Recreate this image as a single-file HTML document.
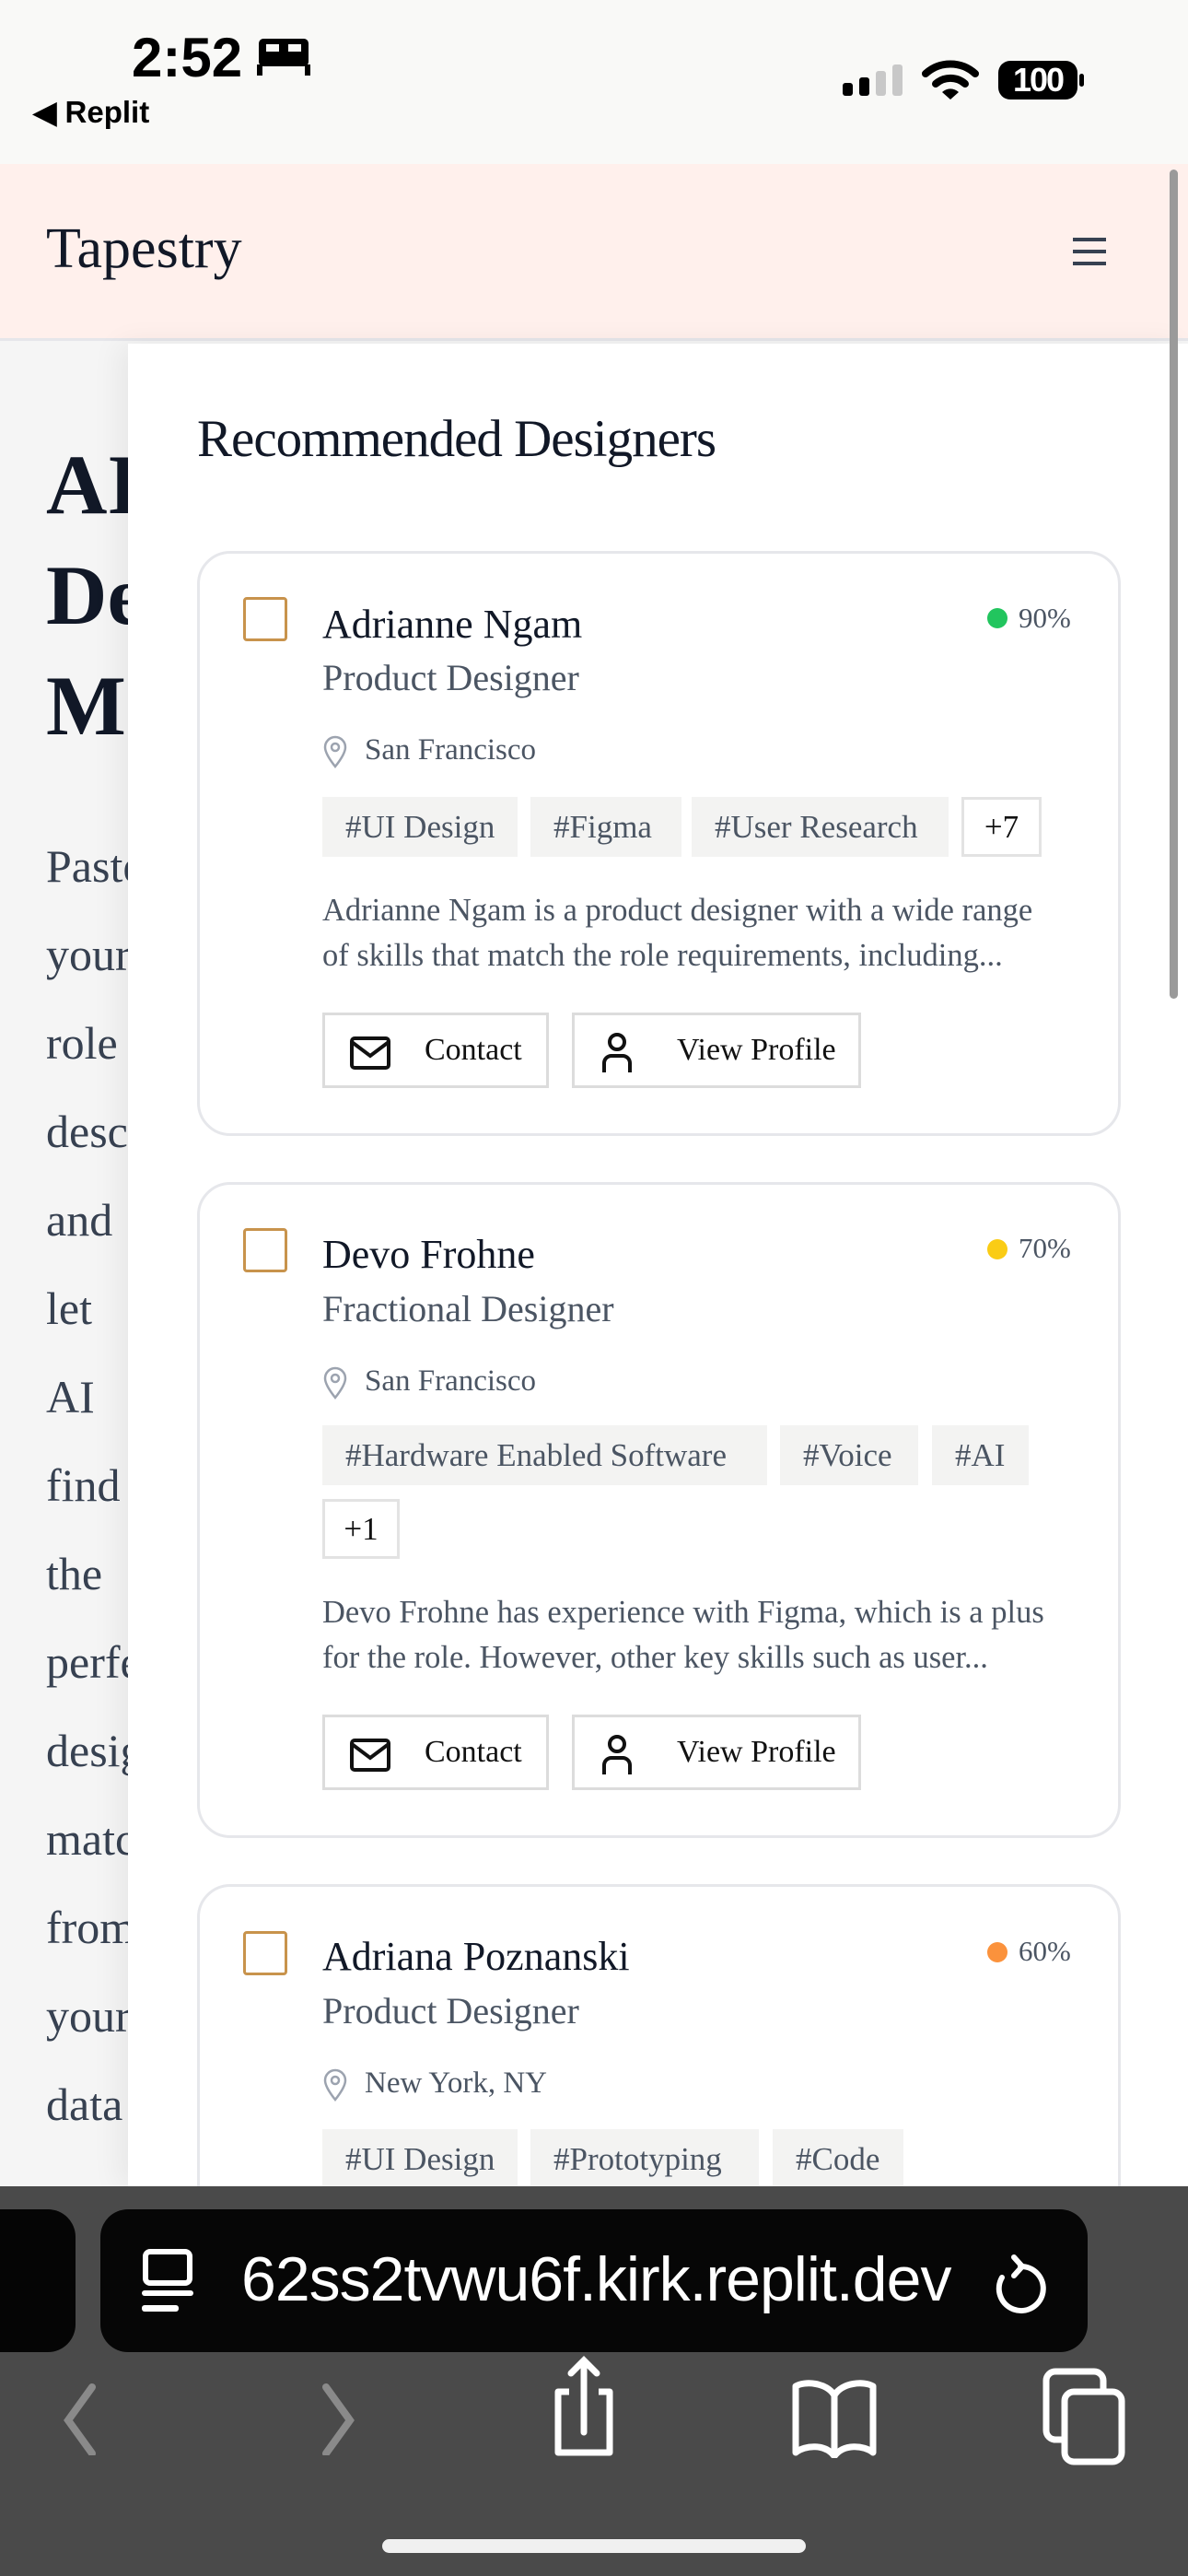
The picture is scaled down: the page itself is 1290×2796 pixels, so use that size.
<!DOCTYPE html>
<html><head><meta charset="utf-8"><style>
*{margin:0;padding:0;box-sizing:border-box}
body{width:1290px;height:2796px;overflow:hidden;position:relative;background:#f5f5f5;font-family:"Liberation Serif",serif;color:#111827}
.a{position:absolute;white-space:nowrap}
.st{background:#f9f9f7;left:0;top:0;width:1290px;height:178px}
.hdr{left:0;top:178px;width:1290px;height:192px;background:#fff0ec;border-bottom:3px solid #e6e6ea}
.panel{left:139px;top:373px;width:1151px;height:2000px;background:#fff;box-shadow:-10px 0 30px rgba(0,0,0,.06)}
.card{position:absolute;left:214px;width:1003px;border:3px solid #e6e7eb;border-radius:36px;background:#fff}
.cb{position:absolute;width:48px;height:48px;border:3px solid #c8934c;border-radius:4px}
.nm{font-size:44px;line-height:50px;color:#111827}
.rl{font-size:40px;line-height:44px;color:#4b5563}
.lc{font-size:33px;line-height:40px;color:#4b5563}
.tag{position:absolute;height:65px;background:#f3f3f2;font-size:35px;line-height:65px;color:#4b5563;padding-left:25px;overflow:hidden}
.more{background:#fff;border:3px solid #e3e3e3;color:#111;line-height:59px;padding-left:0;text-align:center}
.ds{font-size:34.5px;line-height:49px;color:#4b5563}
.btn{position:absolute;height:82px;border:3px solid #dcdcdc;background:#fff;font-size:34px;line-height:76px;color:#111}
.pct{font-size:31px;line-height:36px;color:#4b5563}
.dot{position:absolute;width:22px;height:22px;border-radius:50%}
.big{font-size:92px;line-height:120px;font-weight:bold;color:#111827;left:50px}
.bt{font-size:50px;line-height:96px;color:#374151;left:50px}
</style></head><body>
<div class="a st"></div>
<div class="a" style="left:143px;top:28px;font:bold 60px 'Liberation Sans',sans-serif;color:#000">2:52</div>
<svg class="a" style="left:279px;top:42px" width="58" height="40" viewBox="0 0 58 40"><rect x="2" y="0" width="54" height="30" rx="5" fill="#000"/><rect x="10" y="6" width="14" height="8" fill="#f9f9f7"/><rect x="34" y="6" width="14" height="8" fill="#f9f9f7"/><rect x="0" y="28" width="6" height="12" fill="#000"/><rect x="52" y="28" width="6" height="12" fill="#000"/></svg>
<div class="a" style="left:36px;top:102px;font:bold 33px 'Liberation Sans',sans-serif;color:#000">◀ Replit</div>
<svg class="a" style="left:913px;top:70px" width="70" height="36" viewBox="0 0 70 36"><rect x="2" y="20" width="11" height="14" rx="3" fill="#000"/><rect x="20" y="14" width="11" height="20" rx="3" fill="#000"/><rect x="38" y="7" width="11" height="27" rx="3" fill="#c8c8c8"/><rect x="56" y="0" width="11" height="34" rx="3" fill="#c8c8c8"/></svg>
<svg class="a" style="left:1000px;top:64px" width="64" height="44" viewBox="0 0 64 44"><path d="M5 16 A40 40 0 0 1 59 16" stroke="#000" stroke-width="8" fill="none" stroke-linecap="round"/><path d="M16 27 A24 24 0 0 1 48 27" stroke="#000" stroke-width="8" fill="none" stroke-linecap="round"/><path d="M23 36 L32 44 L41 36 A13 13 0 0 0 23 36Z" fill="#000"/></svg>
<div class="a" style="left:1084px;top:66px;width:86px;height:42px;background:#000;border-radius:13px;color:#fff;font:bold 36px/42px 'Liberation Sans',sans-serif;text-align:center;letter-spacing:-2px">100</div>
<div class="a" style="left:1172px;top:80px;width:5px;height:14px;background:#000;border-radius:3px"></div>

<div class="a hdr"></div>
<div class="a" style="left:50px;top:234px;font-size:62px;line-height:72px;color:#111827">Tapestry</div>
<div class="a" style="left:1165px;top:258px;width:36px;height:4px;background:#374151"></div>
<div class="a" style="left:1165px;top:271px;width:36px;height:4px;background:#374151"></div>
<div class="a" style="left:1165px;top:284px;width:36px;height:4px;background:#374151"></div>

<div class="a big" style="top:466px">AI<br>Designer<br>Match</div>
<div class="a bt" style="top:892px">Paste<br>your<br>role<br>description<br>and<br>let<br>AI<br>find<br>the<br>perfect<br>designer<br>matches<br>from<br>your<br>data</div>

<div class="a panel"></div>
<div class="a" style="left:1270px;top:184px;width:9px;height:900px;background:#9a9a9a;border-radius:5px"></div>
<div class="a" style="left:214px;top:444px;font-size:57px;line-height:66px;color:#111827;letter-spacing:-1px">Recommended Designers</div>

<!-- card 1 -->
<div class="card" style="top:598px;height:635px"></div>
<div class="cb" style="left:264px;top:648px"></div>
<div class="a nm" style="left:350px;top:653px">Adrianne Ngam</div>
<div class="a rl" style="left:350px;top:714px">Product Designer</div>
<div class="dot" style="left:1072px;top:660px;background:#22c55e"></div>
<div class="a pct" style="left:1106px;top:653px">90%</div>
<svg class="a" style="left:350px;top:798px" width="28" height="36" viewBox="0 0 28 36"><path d="M14 34C6 24 3 18 3 13a11 11 0 0 1 22 0c0 5-3 11-11 21z" fill="none" stroke="#9ca3af" stroke-width="2.5"/><circle cx="14" cy="13" r="4" fill="none" stroke="#9ca3af" stroke-width="2.5"/></svg>
<div class="a lc" style="left:396px;top:794px">San Francisco</div>
<div class="tag" style="left:350px;top:865px;width:212px">#UI Design</div>
<div class="tag" style="left:576px;top:865px;width:164px">#Figma</div>
<div class="tag" style="left:751px;top:865px;width:279px">#User Research</div>
<div class="tag more" style="left:1044px;top:865px;width:87px">+7</div>
<div class="a ds" style="left:350px;top:964px">Adrianne Ngam is a product designer with a wide range<br>of skills that match the role requirements, including...</div>
<div class="btn" style="left:350px;top:1099px;width:246px"><svg class="a" style="left:26px;top:22px" width="46" height="38" viewBox="0 0 46 38"><rect x="3" y="3" width="40" height="32" rx="3" fill="none" stroke="#111" stroke-width="4"/><path d="M3 7 L23 22 L43 7" fill="none" stroke="#111" stroke-width="4"/></svg><span class="a" style="left:108px;top:0">Contact</span></div>
<div class="btn" style="left:621px;top:1099px;width:314px"><svg class="a" style="left:28px;top:18px" width="36" height="44" viewBox="0 0 36 44"><circle cx="18" cy="11" r="8" fill="none" stroke="#111" stroke-width="4"/><path d="M4 44 V34 a8 8 0 0 1 8-8 h12 a8 8 0 0 1 8 8 V44" fill="none" stroke="#111" stroke-width="4"/></svg><span class="a" style="left:111px;top:0">View Profile</span></div>

<!-- card 2 -->
<div class="card" style="top:1283px;height:712px"></div>
<div class="cb" style="left:264px;top:1333px"></div>
<div class="a nm" style="left:350px;top:1337px">Devo Frohne</div>
<div class="a rl" style="left:350px;top:1399px">Fractional Designer</div>
<div class="dot" style="left:1072px;top:1345px;background:#facc15"></div>
<div class="a pct" style="left:1106px;top:1337px">70%</div>
<svg class="a" style="left:350px;top:1483px" width="28" height="36" viewBox="0 0 28 36"><path d="M14 34C6 24 3 18 3 13a11 11 0 0 1 22 0c0 5-3 11-11 21z" fill="none" stroke="#9ca3af" stroke-width="2.5"/><circle cx="14" cy="13" r="4" fill="none" stroke="#9ca3af" stroke-width="2.5"/></svg>
<div class="a lc" style="left:396px;top:1479px">San Francisco</div>
<div class="tag" style="left:350px;top:1547px;width:483px">#Hardware Enabled Software</div>
<div class="tag" style="left:847px;top:1547px;width:150px">#Voice</div>
<div class="tag" style="left:1012px;top:1547px;width:105px">#AI</div>
<div class="tag more" style="left:350px;top:1627px;width:84px">+1</div>
<div class="a ds" style="left:350px;top:1726px">Devo Frohne has experience with Figma, which is a plus<br>for the role. However, other key skills such as user...</div>
<div class="btn" style="left:350px;top:1861px;width:246px"><svg class="a" style="left:26px;top:22px" width="46" height="38" viewBox="0 0 46 38"><rect x="3" y="3" width="40" height="32" rx="3" fill="none" stroke="#111" stroke-width="4"/><path d="M3 7 L23 22 L43 7" fill="none" stroke="#111" stroke-width="4"/></svg><span class="a" style="left:108px;top:0">Contact</span></div>
<div class="btn" style="left:621px;top:1861px;width:314px"><svg class="a" style="left:28px;top:18px" width="36" height="44" viewBox="0 0 36 44"><circle cx="18" cy="11" r="8" fill="none" stroke="#111" stroke-width="4"/><path d="M4 44 V34 a8 8 0 0 1 8-8 h12 a8 8 0 0 1 8 8 V44" fill="none" stroke="#111" stroke-width="4"/></svg><span class="a" style="left:111px;top:0">View Profile</span></div>

<!-- card 3 -->
<div class="card" style="top:2045px;height:500px"></div>
<div class="cb" style="left:264px;top:2096px"></div>
<div class="a nm" style="left:350px;top:2099px">Adriana Poznanski</div>
<div class="a rl" style="left:350px;top:2161px">Product Designer</div>
<div class="dot" style="left:1072px;top:2108px;background:#fb923c"></div>
<div class="a pct" style="left:1106px;top:2100px">60%</div>
<svg class="a" style="left:350px;top:2245px" width="28" height="36" viewBox="0 0 28 36"><path d="M14 34C6 24 3 18 3 13a11 11 0 0 1 22 0c0 5-3 11-11 21z" fill="none" stroke="#9ca3af" stroke-width="2.5"/><circle cx="14" cy="13" r="4" fill="none" stroke="#9ca3af" stroke-width="2.5"/></svg>
<div class="a lc" style="left:396px;top:2241px">New York, NY</div>
<div class="tag" style="left:350px;top:2311px;width:212px">#UI Design</div>
<div class="tag" style="left:576px;top:2311px;width:248px">#Prototyping</div>
<div class="tag" style="left:839px;top:2311px;width:142px">#Code</div>

<!-- safari bottom -->
<div class="a" style="left:0;top:2373px;width:1290px;height:423px;background:#4a4a4a"></div>
<div class="a" style="left:-40px;top:2398px;width:122px;height:155px;background:#050505;border-radius:30px"></div>
<div class="a" style="left:109px;top:2398px;width:1072px;height:155px;background:#060606;border-radius:30px"></div>
<svg class="a" style="left:152px;top:2440px" width="60" height="70" viewBox="0 0 60 70"><rect x="6" y="4" width="48" height="34" rx="5" fill="none" stroke="#fff" stroke-width="6"/><rect x="2" y="46" width="56" height="6" rx="3" fill="#fff"/><rect x="2" y="62" width="40" height="7" rx="3" fill="#fff"/></svg>
<div class="a" style="left:262px;top:2434px;font:68px/80px 'Liberation Sans',sans-serif;color:#fff;letter-spacing:-1px">62ss2tvwu6f.kirk.replit.dev</div>
<svg class="a" style="left:1078px;top:2440px" width="64" height="76" viewBox="0 0 64 76"><path d="M30 20 A24 24 0 1 1 10 32" fill="none" stroke="#fff" stroke-width="6" stroke-linecap="round"/><path d="M23 10 L32 20 L23 30" fill="none" stroke="#fff" stroke-width="6" stroke-linecap="round" stroke-linejoin="round"/></svg>
<svg class="a" style="left:62px;top:2585px" width="50" height="80" viewBox="0 0 50 80"><path d="M38 6 L12 42 L38 78" fill="none" stroke="#8a8a8a" stroke-width="8" stroke-linecap="round"/></svg>
<svg class="a" style="left:342px;top:2585px" width="50" height="80" viewBox="0 0 50 80"><path d="M12 6 L38 42 L12 78" fill="none" stroke="#8a8a8a" stroke-width="8" stroke-linecap="round"/></svg>
<svg class="a" style="left:596px;top:2556px" width="76" height="112" viewBox="0 0 76 112"><path d="M38 6 V84 M24 20 L38 6 L52 20" fill="none" stroke="#fff" stroke-width="7" stroke-linecap="round"/><path d="M22 40 H10 V106 H66 V40 H54" fill="none" stroke="#fff" stroke-width="7" stroke-linejoin="round"/></svg>
<svg class="a" style="left:858px;top:2578px" width="96" height="90" viewBox="0 0 96 90"><path d="M48 22 C40 8 16 6 6 12 V84 C16 76 38 74 48 88 C58 74 80 76 90 84 V12 C80 6 56 8 48 22 Z M48 22 V88" fill="none" stroke="#fff" stroke-width="7" stroke-linejoin="round"/></svg>
<svg class="a" style="left:1130px;top:2568px" width="96" height="110" viewBox="0 0 96 110"><rect x="6" y="6" width="62" height="74" rx="10" fill="none" stroke="#fff" stroke-width="7"/><rect x="26" y="28" width="62" height="76" rx="10" fill="#4a4a4a" stroke="#fff" stroke-width="7"/></svg>
<div class="a" style="left:415px;top:2756px;width:460px;height:15px;background:#f0f0f0;border-radius:8px"></div>
</body></html>
